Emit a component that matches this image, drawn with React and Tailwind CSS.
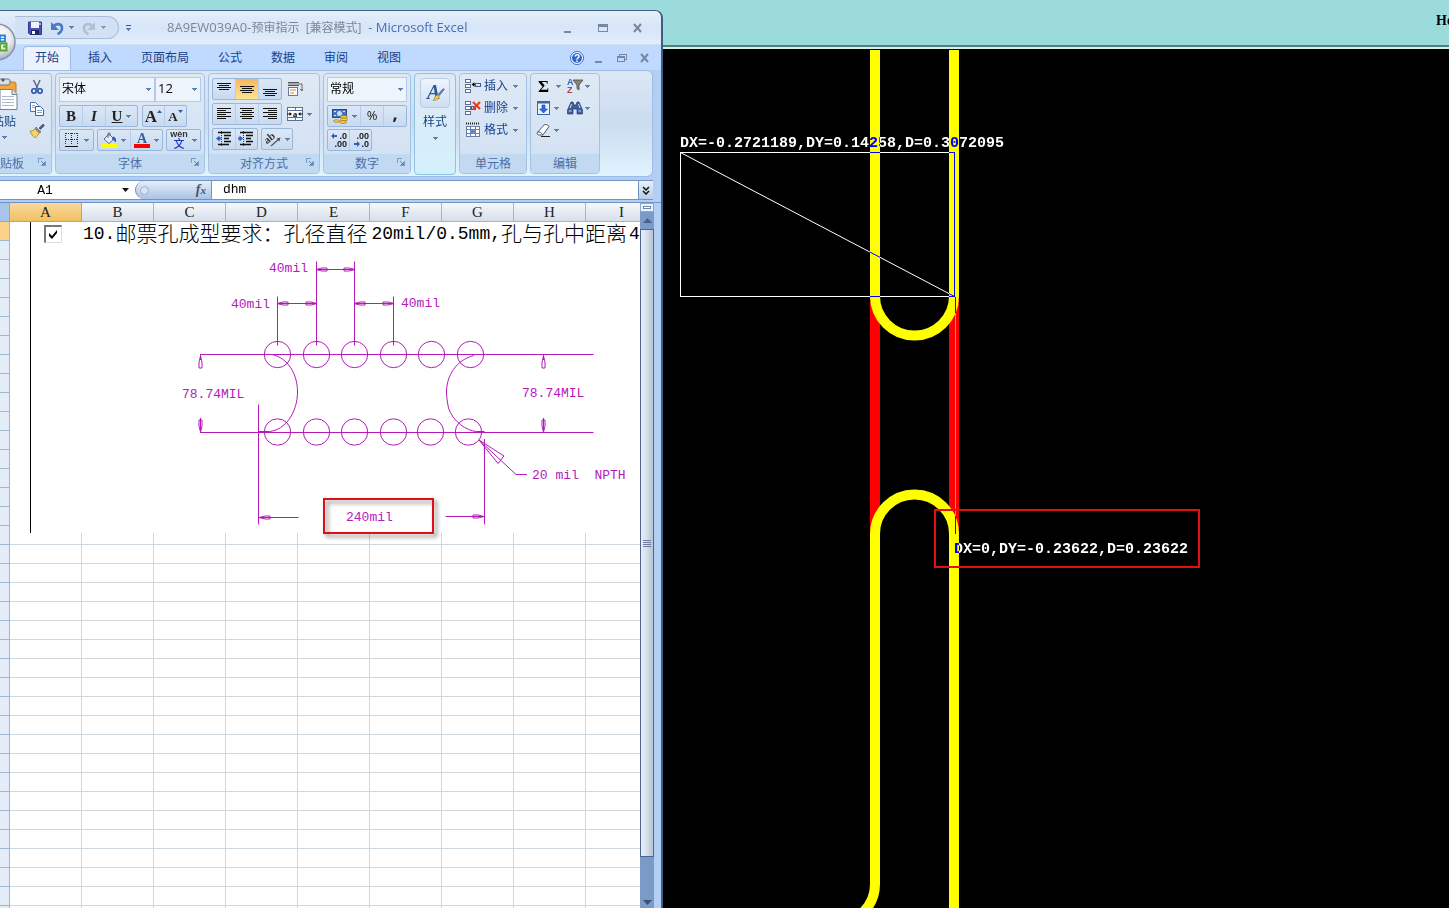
import clsx from 'clsx';

const COLUMNS = ['A', 'B', 'C', 'D', 'E', 'F', 'G', 'H', 'I'];
const ROWS = Array.from({ length: 37 }, (_, i) => i + 1);
const TABS = ['开始', '插入', '页面布局', '公式', '数据', '审阅', '视图'];

const INK = '#b41ab8';
const UI_FONT = "font-['Open_Sans','Noto_Sans_CJK_SC',sans-serif]";
const MONO_FONT = "font-['Liberation_Mono','Noto_Sans_CJK_SC',monospace]";

/* ---------- small icons ---------- */

function Caret({ className }) {
  return (
    <svg viewBox="0 0 5 3" className={clsx('h-[3px] w-[5px] shrink-0', className)} fill="#5f7fae" shapeRendering="crispEdges">
      <path d="M0 0h5v1H4v1H3v1H2V2H1V1H0z" />
    </svg>
  );
}

function Icon({ children, size = 'size-4' }) {
  return (
    <svg viewBox="0 0 16 16" className={clsx('shrink-0', size)} fill="none">
      {children}
    </svg>
  );
}

function LinesIcon({ d }) {
  return (
    <Icon>
      <path d={d} stroke="#111" shapeRendering="crispEdges" />
    </Icon>
  );
}

function SaveIcon() {
  return (
    <Icon>
      <path d="M1.500 2h13v12.500H3L1.500 13z" fill="#4a50b4" stroke="#31368c" />
      <rect x="4" y="2" width="8" height="6" fill="#eef2fc" />
      <rect x="12" y="3" width="2" height="2" fill="#a9b2ea" />
      <rect x="4" y="10" width="8" height="4.500" fill="#23275f" />
      <rect x="5" y="11" width="3" height="3" fill="#fff" />
    </Icon>
  );
}

function UndoIcon({ color, flip }) {
  return (
    <Icon>
      <g transform={flip ? 'translate(16 0) scale(-1 1)' : undefined}>
        <path d="M4 7C7 3 13 3 13 8c0 3-2 5-4.500 6" stroke={color} strokeWidth="2.600" />
        <path d="M2 2v8h8z" fill={color} />
      </g>
    </Icon>
  );
}

function ScissorsIcon() {
  return (
    <Icon>
      <path d="M4.500 1l4.500 9M11 1L7 10" stroke="#5c6f8e" strokeWidth="1.600" />
      <circle cx="5" cy="12" r="2.200" stroke="#2852b0" strokeWidth="1.600" />
      <circle cx="11" cy="12" r="2.200" stroke="#2852b0" strokeWidth="1.600" />
    </Icon>
  );
}

function CopyIcon() {
  return (
    <Icon>
      <path d="M1.500 1.500h5l3 3v6h-8z" fill="#fff" stroke="#4b73b5" />
      <path d="M6.500 5.500h5l3 3v6h-8z" fill="#fff" stroke="#3461ad" />
      <path d="M3 4.500h3M3 6.500h3M8 9.500h5M8 11.500h5" stroke="#7fa0d6" />
    </Icon>
  );
}

function BrushIcon() {
  return (
    <Icon>
      <path d="M10 5l4-4 1.500 1.500-4 4z" fill="#4e5e8c" stroke="#3a466c" strokeWidth=".6" />
      <path d="M7 4l5 5-2 1-4-4z" fill="#8a8a9a" stroke="#55586a" strokeWidth=".6" />
      <path d="M6 6l4 4c-1 3-3 4-4 5C4 13 2 11 1 8c2 0 4-1 5-2z" fill="#f2d46a" stroke="#a68424" strokeWidth=".8" />
    </Icon>
  );
}

function ClipboardIcon() {
  return (
    <svg viewBox="0 0 28 32" className="h-8 w-7 shrink-0" fill="none">
      <rect x="1" y="4" width="25" height="26" rx="2" fill="#efa93c" stroke="#b97c24" />
      <rect x="7" y="1" width="13" height="6" rx="2" fill="#d9dde4" stroke="#6d7480" />
      <circle cx="13" cy="2" r="1.500" fill="#555" />
      <path d="M10 11.500h12l5 5V31.500H10z" fill="#fff" stroke="#6e7f98" />
      <path d="M22 11.500v5h5" stroke="#6e7f98" fill="#dbe4f2" />
      <path d="M12 18.500h12M12 21.500h12M12 24.500h12M12 27.500h12" stroke="#b0b9c8" />
    </svg>
  );
}

function BorderIcon() {
  return (
    <Icon>
      <path d="M1.500 1.500h12M1.500 7.500h12M1.500 1v12M7.500 1v12M13.500 1v12" stroke="#333" strokeDasharray="1 1" shapeRendering="crispEdges" />
      <path d="M1 14.500h13" stroke="#111" strokeWidth="1" shapeRendering="crispEdges" />
    </Icon>
  );
}

function FillColorIcon() {
  return (
    <Icon>
      <path d="M8 2l5 5-5 4.500-5-4.500z" fill="#e8eef8" stroke="#5a6988" />
      <path d="M7 6V1.500c0-1 2-1 2 0V4" stroke="#5a6988" />
      <path d="M12 5c2 0 3 2 2.500 5-1-2-2-2.500-3-2.500z" fill="#2d5cc0" stroke="#2d5cc0" />
      <rect x="0" y="12" width="16" height="4" fill="#ff0" />
    </Icon>
  );
}

function FontColorIcon() {
  return (
    <Icon>
      <text x="8" y="11" textAnchor="middle" fontSize="14" fontWeight="700" fill="#3c5f9e" className="font-['Liberation_Serif',serif]">A</text>
      <rect x="0" y="12" width="16" height="4" fill="#f00" />
    </Icon>
  );
}

function PhoneticIcon() {
  return (
    <svg viewBox="0 0 18 18" className="size-[18px] shrink-0">
      <text x="9" y="6" textAnchor="middle" fontSize="9" fontWeight="700" fill="#333" className="font-['Liberation_Sans',sans-serif]">wén</text>
      <text x="9" y="17" textAnchor="middle" fontSize="11" fontWeight="500" fill="#2036c8" className="font-['Noto_Sans_CJK_SC',sans-serif]">文</text>
    </svg>
  );
}

function WrapIcon() {
  return (
    <Icon>
      <path d="M1 1.500h11M1 4.500h11" stroke="#555" />
      <path d="M1 3h14v7l-2-2m2 2l1-2" stroke="#6b5a4c" strokeWidth=".9" />
      <rect x="1.500" y="6.500" width="9" height="8" fill="#fff" stroke="#6a7a96" />
      <path d="M3 9h6M3 12h4" stroke="#d9884a" strokeWidth="1.200" />
    </Icon>
  );
}

function MergeIcon() {
  return (
    <Icon>
      <rect x=".5" y="1.500" width="15" height="13" fill="#fff" stroke="#5d7396" />
      <path d="M.500 4.500h15M.500 11.500h15M8.500 1.500v3M8.500 11.500v3" stroke="#5d7396" />
      <path d="M0 8h4M12 8h4" stroke="#111" />
      <path d="M2.500 6l2.500 2-2.500 2zM13.500 6L11 8l2.500 2z" fill="#111" />
      <text x="8" y="10.500" textAnchor="middle" fontSize="9" fontWeight="700" fill="#111" className="font-['Liberation_Serif',serif]">a</text>
    </Icon>
  );
}

function IndentIcon({ right }) {
  return (
    <Icon>
      <path d="M2 1.500h13M8 4.500h7M8 7.500h5M8 10.500h7M2 13.500h11" stroke="#111" strokeWidth="1.400" />
      <path d="M5.500 0v16" stroke="#333" strokeDasharray="1 1" />
      <path d={right ? 'M5 7.500L1.500 4.500v2H0v2h1.500v2z' : 'M0 7.500L3.500 4.500v2H5v2H3.500v2z'} fill="#2f5fc4" />
    </Icon>
  );
}

function OrientationIcon() {
  return (
    <Icon>
      <text x="1" y="13" fontSize="11" fontWeight="700" fill="#333" transform="rotate(-40 5 11) translate(0 -2)" className="font-['Liberation_Serif',serif]">ab</text>
      <path d="M6 15l8-7" stroke="#555" strokeWidth="1.200" />
      <path d="M15.500 6.500l-4 1 3 3z" fill="#555" />
    </Icon>
  );
}

function CurrencyIcon() {
  return (
    <Icon>
      <rect x=".5" y="1.500" width="14" height="8" fill="#4a75b8" stroke="#294d88" />
      <circle cx="7.500" cy="5.500" r="2.500" fill="#c9dbf4" />
      <path d="M2 3.500h2M11 3.500h2M2 7.500h2" stroke="#dce8fa" />
      <ellipse cx="12" cy="9" rx="3.500" ry="1.500" fill="#f7cb4d" stroke="#a8741a" strokeWidth=".7" />
      <ellipse cx="12" cy="11.500" rx="3.500" ry="1.500" fill="#f7cb4d" stroke="#a8741a" strokeWidth=".7" />
      <ellipse cx="11" cy="14" rx="3.500" ry="1.500" fill="#f7cb4d" stroke="#a8741a" strokeWidth=".7" />
      <ellipse cx="4.500" cy="13" rx="3" ry="1.300" fill="#f7cb4d" stroke="#a8741a" strokeWidth=".7" />
    </Icon>
  );
}

function DecimalIcon({ more }) {
  return (
    <svg viewBox="0 0 18 16" className="h-4 w-[18px] shrink-0">
      <g fontSize="9" fontWeight="700" fill="#222" className="font-['Liberation_Sans',sans-serif]">
        <text x="17" y="7" textAnchor="end">{more ? '.0' : '.00'}</text>
        <text x="17" y="15" textAnchor="end">{more ? '.00' : '.0'}</text>
      </g>
      <path d={more ? 'M1 4l3-3v2h3v2H4v2z' : 'M8 12L5 9v2H2v2h3v2z'} fill="#2f5fc4" />
    </svg>
  );
}

function StyleIcon() {
  return (
    <Icon size="size-5">
      <text x="7" y="13" textAnchor="middle" fontSize="16" fontStyle="italic" fontWeight="700" fill="#2e5596" className="font-['Liberation_Serif',serif]">A</text>
      <path d="M15.500 5l-4 5-1-1 4-4.500z" fill="#6b7fae" stroke="#44557f" strokeWidth=".5" />
      <path d="M11.500 10c0 3-3 4-5 4 1-1 1-3 3-4.500z" fill="#f3c94f" stroke="#9c7a1d" strokeWidth=".5" />
    </Icon>
  );
}

function CellsIcon({ kind }) {
  if (kind === 'format') {
    return (
      <Icon>
        <path d="M1 1.500h14" stroke="#222" strokeDasharray="1 1" strokeWidth="2" />
        <rect x="1.500" y="4.500" width="13" height="10" fill="#fff" stroke="#6b7fa6" />
        <path d="M1.500 7.500h13M1.500 11.500h13M5.500 4.500v10M10.500 4.500v10" stroke="#6b7fa6" />
        <rect x="5" y="7" width="6" height="5" fill="#5c89d6" />
      </Icon>
    );
  }
  return (
    <Icon>
      <rect x=".5" y="1.500" width="5" height="3" fill="#fff" stroke="#5b6f95" />
      <rect x=".5" y="6.500" width="5" height="3" fill="#fff" stroke="#5b6f95" />
      <rect x=".5" y="11.500" width="5" height="3" fill="#fff" stroke="#5b6f95" />
      {kind === 'insert' ? (
        <>
          <path d="M6.500 6.500l3-2.500v5z M9 6h2v1H9z" fill="#111" />
          <rect x="10.500" y="5.500" width="5" height="3" fill="#dbe7fb" stroke="#3c5ea0" />
        </>
      ) : (
        <>
          <rect x="6.500" y="6.500" width="4" height="3" fill="#dbe7fb" stroke="#3c5ea0" />
          <path d="M8 2l7 7M15 2L8 9" stroke="#e4401f" strokeWidth="2.200" />
        </>
      )}
    </Icon>
  );
}

function SortFilterIcon() {
  return (
    <Icon>
      <g fontSize="9" fontWeight="700" className="font-['Liberation_Sans',sans-serif]">
        <text x="0" y="7" fill="#3563b8">A</text>
        <text x="0" y="15" fill="#b04054">Z</text>
      </g>
      <path d="M6 2h10l-4 5v5l-2-1.500V7z" fill="#8a8578" stroke="#4c4a44" strokeWidth=".8" />
    </Icon>
  );
}

function FillDownIcon() {
  return (
    <Icon>
      <rect x="1.500" y="1.500" width="12" height="13" fill="#eaf2ff" stroke="#3c66b0" />
      <rect x="1" y="1" width="13" height="2.500" fill="#3c66b0" />
      <path d="M6 5h3v4h2.500l-4 4-4-4H6z" fill="#2e6be0" stroke="#1d479c" strokeWidth=".6" />
    </Icon>
  );
}

function BinocularsIcon() {
  return (
    <Icon>
      <path d="M4 2h2l1 3h2l1-3h2l3.500 8v4H10V9H6v5H.500v-4z" fill="#3f5f9c" stroke="#263c6c" strokeWidth=".7" />
      <path d="M2 11h2.500M11.500 11H14M4.500 4L3 8M11.500 4L13 8" stroke="#cfe0fa" />
    </Icon>
  );
}

function EraserIcon() {
  return (
    <Icon>
      <path d="M1 11l7-8c1-1 5 0 5 1.500L7 13H3C1.500 13 1 12 1 11z" fill="#fff" stroke="#4b5a78" />
      <path d="M1.500 10c2-.5 4 .5 5 2.500" stroke="#4b5a78" />
      <path d="M5 14.500h9" stroke="#222" />
    </Icon>
  );
}

function LauncherIcon() {
  return (
    <svg viewBox="0 0 9 9" className="size-[9px]" fill="none" shapeRendering="crispEdges">
      <path d="M1.500 6V1.500H6M8.500 4v4.500H4" stroke="#7c9cc8" />
      <path d="M4 4l3 3M7.500 4.500v3h-3" stroke="#6485b8" />
    </svg>
  );
}

/* ---------- ribbon pieces ---------- */

function RibbonGroup({ title, launcher, className, children }) {
  return (
    <section className={clsx('flex h-[101px] shrink-0 flex-col overflow-hidden rounded-sm border border-[#a5c2e4] bg-linear-to-b from-[#dfe9f5] to-[#d0e0f2]', className)}>
      <div className="flex-1 px-[3px] pt-[3px]">{children}</div>
      <div className="relative flex h-[19px] items-center justify-center bg-[#c1d9f1] text-[#4a6ea9]">
        {title}
        {launcher && (
          <button aria-label={title} className="absolute top-[3px] right-[5px]">
            <LauncherIcon />
          </button>
        )}
      </div>
    </section>
  );
}

function ButtonBar({ className, children }) {
  return (
    <div className={clsx('flex h-[22px] divide-x divide-[#b9cde8] overflow-hidden rounded-xs border border-[#9ab6da] bg-linear-to-b from-[#dbe7f6] to-[#c8daf0]', className)}>
      {children}
    </div>
  );
}

function ToolButton({ label, caret, active, className, children }) {
  return (
    <button
      aria-label={label}
      className={clsx('flex items-center justify-center', active && 'bg-linear-to-b from-[#f5b565] to-[#fde58f]', caret && 'gap-1', className || 'flex-1')}
    >
      {children}
      {caret && <Caret />}
    </button>
  );
}

function RibbonSelect({ label, value, className }) {
  return (
    <div className={clsx('relative h-[25px]', className)}>
      <select aria-label={label} className="h-full w-full appearance-none border border-[#b3cbe8] bg-[#eef4fc] px-[2px] pb-[2px] text-black">
        <option>{value}</option>
      </select>
      <Caret className="pointer-events-none absolute top-[11px] right-1" />
    </div>
  );
}

function WindowButtons({ restore, className }) {
  return (
    <div className={clsx('flex items-center', className)}>
      <button aria-label="最小化">
        <svg viewBox="0 0 10 10" className="size-[10px]"><path d="M1 8h7v2H1z" fill="#7888a0" /></svg>
      </button>
      <button aria-label={restore ? '还原窗口' : '最大化'}>
        <svg viewBox="0 0 10 10" className="size-[10px]" fill="none" stroke="#7888a0" shapeRendering="crispEdges">
          {restore ? <path d="M2.500 3V1.500h7v5H8M.500 3.500h7v5h-7zM2 1h8M0 4h8" /> : <path d="M.500 1.500h9v7h-9zM0 2.500h10M0 3.500h10" />}
        </svg>
      </button>
      <button aria-label="关闭">
        <svg viewBox="0 0 10 10" className="size-[10px]"><path d="M1 1l7 8M8 1L1 9" stroke="#7888a0" strokeWidth="2" /></svg>
      </button>
    </div>
  );
}

function OfficeButton() {
  return (
    <button aria-label="Office" className="absolute top-[12px] -left-[22px]">
      <svg viewBox="0 0 38 38" className="size-[38px]" fill="none">
        <defs>
          <radialGradient id="orb" cx=".5" cy=".3" r=".7">
            <stop offset="0" stopColor="#ffffff" />
            <stop offset=".6" stopColor="#e6e9f0" />
            <stop offset="1" stopColor="#a9afbd" />
          </radialGradient>
        </defs>
        <circle cx="19" cy="19" r="18" fill="url(#orb)" stroke="#8790a5" strokeWidth="1.500" />
        <path d="M15 12.500h6M22 12.500h5v6h-5z" fill="#fff" stroke="#2a82d2" strokeWidth="1.800" />
        <path d="M22 15.500h5" stroke="#2a82d2" />
        <path d="M16 20.500h12.500v7H16zM22 20v8M25 23.500h4" stroke="#56a829" strokeWidth="2" />
      </svg>
    </button>
  );
}

function TitleBar() {
  return (
    <header className="flex h-[33px] items-center bg-linear-to-b from-[#e6effb] via-[#d6e5f8] to-[#e2edfb]">
      <div className="ml-[15px] flex h-[23px] w-[104px] items-center rounded-r-full border border-l-0 border-[#a9bedc] bg-[#d3e1f4] pl-[12px]">
        <button aria-label="保存"><SaveIcon /></button>
        <button aria-label="撤消" className="ml-[6px] flex items-center gap-[4px]"><UndoIcon color="#4b78c8" /><Caret /></button>
        <button aria-label="恢复" className="ml-[7px] flex items-center gap-[4px] opacity-70"><UndoIcon color="#a3b3cc" flip /><Caret /></button>
      </div>
      <button aria-label="自定义快速访问工具栏" className="ml-[7px] flex flex-col gap-[2px]">
        <span className="h-px w-[5px] bg-[#35558c]" />
        <Caret />
      </button>
      <h1 className="ml-[36px] flex-1 whitespace-pre text-[12px] text-[#7d8796]">
        <span className="text-[13px]">8A9EW039A0-</span>预审指示&nbsp; [兼容模式]<span className="text-[13px] text-[#4a6fae]">{'  - Microsoft Excel'}</span>
      </h1>
      <WindowButtons className="mr-[18px] gap-[25px]" />
    </header>
  );
}

function TabStrip() {
  return (
    <nav className="flex h-[26px] items-stretch border-t border-[#cfe0f6] bg-[#bfd9ff] pl-[23px]">
      <div className="flex flex-1 gap-[5px] pt-px">
        {TABS.map((tab, i) => (
          <button
            key={tab}
            className={clsx(
              'pb-px text-[#15428b]',
              i === 0 ? 'rounded-t-sm border border-b-0 border-[#9dbde6] bg-[#eaf3fd] px-[11px]' : 'px-3'
            )}
          >
            {tab}
          </button>
        ))}
      </div>
      <div className="mr-[11px] flex items-center gap-[10px]">
        <button aria-label="帮助">
          <svg viewBox="0 0 14 14" className="size-[14px]">
            <circle cx="7" cy="7" r="6.500" fill="#fff" stroke="#3e68b8" />
            <circle cx="7" cy="7" r="5" fill="#2f64cc" />
            <text x="7" y="10.500" textAnchor="middle" fontSize="10" fontWeight="700" fill="#fff" className="font-['Liberation_Sans',sans-serif]">?</text>
          </svg>
        </button>
        <WindowButtons restore className="gap-[13px]" />
      </div>
    </nav>
  );
}

function Ribbon() {
  return (
    <div className="mr-[8px] flex h-[107px] gap-[3px] rounded-r-md border border-l-0 border-[#9dbde6] bg-linear-to-b from-[#dbe7f5] via-[#cbdcf0] to-[#dff4ff] pt-[2px]">
      {/* 剪贴板 */}
      <section className="flex h-[101px] w-[52px] shrink-0 flex-col overflow-hidden rounded-r-sm border border-l-0 border-[#a5c2e4] bg-linear-to-b from-[#dfe9f5] to-[#d0e0f2]">
        <div className="flex flex-1 justify-between pr-[6px]">
          <button className="-ml-[10px] flex flex-col items-center pt-[4px]">
            <ClipboardIcon />
            <span className="mt-[3px] leading-[18px] text-[#15428b]">粘贴</span>
            <Caret className="mt-[5px]" />
          </button>
          <div className="flex flex-col gap-[6px] pt-[5px]">
            <button aria-label="剪切"><ScissorsIcon /></button>
            <button aria-label="复制"><CopyIcon /></button>
            <button aria-label="格式刷"><BrushIcon /></button>
          </div>
        </div>
        <div className="flex h-[19px] items-center justify-between bg-[#c1d9f1] pr-[5px] text-[#4a6ea9]">
          <span className="-ml-[12px] whitespace-nowrap">剪贴板</span>
          <button aria-label="剪贴板" className="-mt-[5px]"><LauncherIcon /></button>
        </div>
      </section>

      <RibbonGroup title="字体" launcher className="w-[150px]">
        <div className="flex">
          <RibbonSelect label="字体" value="宋体" className="w-[96px]" />
          <RibbonSelect label="字号" value="12" className="w-[46px] text-[13px]" />
        </div>
        <div className="mt-[3px] flex gap-[4px] font-['Liberation_Serif',serif] text-[15px] text-[#222]">
          <ButtonBar className="w-[79px]">
            <ToolButton className="w-[23px] font-bold">B</ToolButton>
            <ToolButton className="w-[23px] font-bold italic">I</ToolButton>
            <ToolButton caret className="flex-1 font-bold"><span className="underline">U</span></ToolButton>
          </ButtonBar>
          <ButtonBar className="w-[45px] font-bold">
            <ToolButton label="增大字号">
              <span className="text-[17px] leading-none">A</span>
              <svg viewBox="0 0 5 3" className="mb-[10px] h-[3px] w-[5px]"><path d="M0 3L2.500 0 5 3z" fill="#2f5fa8" /></svg>
            </ToolButton>
            <ToolButton label="减小字号">
              <span className="text-[13px] leading-none">A</span>
              <svg viewBox="0 0 5 3" className="mb-[10px] h-[3px] w-[5px]"><path d="M0 0h5L2.500 3z" fill="#2f5fa8" /></svg>
            </ToolButton>
          </ButtonBar>
        </div>
        <div className="mt-[2px] flex gap-[3px]">
          <ButtonBar className="w-[35px]"><ToolButton label="边框" caret><BorderIcon /></ToolButton></ButtonBar>
          <ButtonBar className="w-[67px]">
            <ToolButton label="填充颜色" caret><FillColorIcon /></ToolButton>
            <ToolButton label="字体颜色" caret><FontColorIcon /></ToolButton>
          </ButtonBar>
          <ButtonBar className="w-[35px]"><ToolButton label="拼音" caret><PhoneticIcon /></ToolButton></ButtonBar>
        </div>
      </RibbonGroup>

      <RibbonGroup title="对齐方式" launcher className="w-[112px]">
        <div className="flex gap-[5px] pt-px">
          <ButtonBar className="w-[70px]">
            <ToolButton label="顶端对齐"><LinesIcon d="M1 2.500h14M3 4.500h10M1 6.500h14M3 8.500h10" /></ToolButton>
            <ToolButton label="垂直居中" active><LinesIcon d="M1 5.500h14M3 7.500h10M1 9.500h14M3 11.500h10" /></ToolButton>
            <ToolButton label="底端对齐"><LinesIcon d="M1 8.500h14M3 10.500h10M1 12.500h14M3 14.500h10" /></ToolButton>
          </ButtonBar>
          <button aria-label="自动换行"><WrapIcon /></button>
        </div>
        <div className="mt-[3px] flex gap-[5px]">
          <ButtonBar className="w-[70px]">
            <ToolButton label="文本左对齐"><LinesIcon d="M1 2.500h14M1 4.500h9M1 6.500h14M1 8.500h9M1 10.500h14M1 12.500h9" /></ToolButton>
            <ToolButton label="居中"><LinesIcon d="M1 2.500h14M3 4.500h10M1 6.500h14M3 8.500h10M1 10.500h14M3 12.500h10" /></ToolButton>
            <ToolButton label="文本右对齐"><LinesIcon d="M1 2.500h14M6 4.500h9M1 6.500h14M6 8.500h9M1 10.500h14M6 12.500h9" /></ToolButton>
          </ButtonBar>
          <button aria-label="合并后居中" className="flex items-center gap-1"><MergeIcon /><Caret /></button>
        </div>
        <div className="mt-[3px] flex gap-[3px]">
          <ButtonBar className="w-[46px]">
            <ToolButton label="减少缩进量"><IndentIcon /></ToolButton>
            <ToolButton label="增加缩进量"><IndentIcon right /></ToolButton>
          </ButtonBar>
          <ButtonBar className="w-[32px]"><ToolButton label="方向" caret><OrientationIcon /></ToolButton></ButtonBar>
        </div>
      </RibbonGroup>

      <RibbonGroup title="数字" launcher className="w-[88px]">
        <RibbonSelect label="数字格式" value="常规" className="w-[80px]" />
        <ButtonBar className="mt-[3px] w-[80px]">
          <ToolButton label="会计数字格式" caret className="w-[33px]"><CurrencyIcon /></ToolButton>
          <ToolButton className="flex-1 text-[13px] text-[#222]">%</ToolButton>
          <ToolButton className="flex-1 pb-[6px] text-[18px] leading-none font-bold text-[#222]">,</ToolButton>
        </ButtonBar>
        <ButtonBar className="mt-[2px] w-[45px]">
          <ToolButton label="增加小数位数"><DecimalIcon more /></ToolButton>
          <ToolButton label="减少小数位数"><DecimalIcon /></ToolButton>
        </ButtonBar>
      </RibbonGroup>

      <button className="flex h-[102px] w-[42px] shrink-0 flex-col items-center rounded-sm border border-[#8ec3e4] bg-linear-to-b from-[#dfe9f5] to-[#d3f0fc] pt-[4px] text-[#15428b]">
        <span className="flex size-[30px] items-center justify-center rounded-sm border border-[#b9cce6] bg-linear-to-b from-[#edf4fd] to-[#cfdff3]"><StyleIcon /></span>
        <span className="mt-[5px] leading-[18px]">样式</span>
        <Caret className="mt-[6px]" />
      </button>

      <RibbonGroup title="单元格" className="w-[68px]">
        <div className="flex flex-col gap-[4px] pl-[2px] text-[#15428b]">
          <button className="flex h-[18px] items-center gap-[3px]"><CellsIcon kind="insert" />插入<Caret className="ml-[2px]" /></button>
          <button className="flex h-[18px] items-center gap-[3px]"><CellsIcon kind="delete" />删除<Caret className="ml-[2px]" /></button>
          <button className="flex h-[18px] items-center gap-[3px]"><CellsIcon kind="format" />格式<Caret className="ml-[2px]" /></button>
        </div>
      </RibbonGroup>

      <RibbonGroup title="编辑" className="w-[70px]">
        <div className="grid grid-cols-[28px_28px] gap-x-[3px] gap-y-[4px] pl-[2px]">
          <button className="flex h-[18px] items-center gap-[7px] pl-[2px] font-['Liberation_Serif',serif] text-[17px] leading-none font-bold text-black">Σ<Caret /></button>
          <button aria-label="排序和筛选" className="flex h-[18px] items-center gap-[2px]"><SortFilterIcon /><Caret /></button>
          <button aria-label="填充" className="flex h-[18px] items-center gap-[2px]"><FillDownIcon /><Caret /></button>
          <button aria-label="查找和选择" className="flex h-[18px] items-center gap-[2px]"><BinocularsIcon /><Caret /></button>
          <button aria-label="清除" className="flex h-[18px] items-center gap-[2px]"><EraserIcon /><Caret /></button>
        </div>
      </RibbonGroup>
    </div>
  );
}

function FormulaBar() {
  return (
    <div className={clsx('mr-[8px] flex h-[20px] border-y border-[#6f93c2] bg-[#d6e4f5] text-[13px] text-black', MONO_FONT)}>
      <div className="relative w-[135px] bg-white">
        <input aria-label="名称框" defaultValue="A1" className="h-full w-[90px] bg-transparent text-center outline-none" />
        <svg viewBox="0 0 7 4" className="absolute top-[7px] right-[6px] h-[4px] w-[7px]"><path d="M0 0h7L3.500 4z" fill="#111" /></svg>
      </div>
      <div className="flex w-[77px] border-r border-[#6f93c2] bg-white">
        <div className="flex flex-1 items-center justify-between rounded-l-full border-l border-[#6f93c2] bg-linear-to-b from-[#e6effa] to-[#a9c2e6] pr-[5px] pl-[4px]">
          <span className="size-[9px] rounded-full border border-[#9fb0ca] bg-[#dbe3ee]" />
          <button aria-label="插入函数" className="flex items-baseline font-['Liberation_Serif',serif] text-[14px] leading-[16px] font-bold text-[#4b5563] italic">
            f<span className="text-[11px]">x</span>
          </button>
        </div>
      </div>
      <input aria-label="编辑栏" defaultValue="dhm" className="min-w-0 flex-1 bg-white pl-[11px] outline-none" />
      <button aria-label="展开编辑栏" className="flex w-[15px] items-center justify-center border-l border-[#6f93c2] bg-linear-to-b from-[#eaf2fc] to-[#b7cdea]">
        <svg viewBox="0 0 8 9" className="h-[9px] w-[8px]" fill="none" stroke="#111" strokeWidth="1.500"><path d="M1 1l3 3 3-3M1 5l3 3 3-3" /></svg>
      </button>
    </div>
  );
}

/* ---------- stamp-hole drawing on the sheet ---------- */

function HoleDrawing() {
  const topHoles = [277, 316, 354, 393, 431, 470];
  const bottomHoles = [277, 316, 354, 393, 430, 468];
  return (
    <svg className="pointer-events-none absolute inset-0 h-full w-full overflow-visible" fill="none" stroke={INK}>
      <g transform="translate(-10 -222)">
        {topHoles.map((x) => <circle key={x} cx={x + 0.5} cy="354.500" r="13.200" />)}
        {bottomHoles.map((x) => <circle key={x} cx={x + 0.5} cy="432" r="13.200" />)}
        <path d="M200 354.500h393.500M200 432.500h393.500" />
        <path d="M258 354.500h14C288 358 297.500 374 297.500 392c0 20-12 38-28 39.500h-11" />
        <path d="M474 355.500C456 360 446.500 376 446.500 392c0 5 1 11 2 16 4 13 18 23 28 23.500h8" />
        {/* top spacing dimensions */}
        <path d="M316.500 261.500v84M354.500 261.500v84M277.500 296.500v49M393.500 296.500v49" />
        <path d="M316.500 269.500h38M277.500 303.500h39M354.500 303.500h39" />
        {[[316, 269], [277, 303], [354, 303]].map(([x, y]) => (
          <path key={`${x}-${y}`} d={`M${x} ${y + 0.5}l6-1.500h5v3h-5z`} />
        ))}
        {[[355, 269], [317, 303], [394, 303]].map(([x, y]) => (
          <path key={`${x}-${y}`} d={`M${x} ${y + 0.5}l-6-1.500h-5v3h5z`} />
        ))}
        {/* height dimensions */}
        {[200, 543].map((x) => (
          <g key={x}>
            <path d={`M${x + 0.5} 355v5M${x + 0.5} 432v-14`} />
            <path d={`M${x + 0.5} 356l-1.500 6v6h3v-6zM${x + 0.5} 432l-1.500-6v-6h3v6z`} />
          </g>
        ))}
        {/* overall width */}
        <path d="M258.500 404.500v120M484.500 439v85.500M258.500 517.500h40M445.500 516.500h39" />
        <path d="M259 517.500l6-1.500h5v3h-5zM484 516.500l-6-1.500h-5v3h5z" />
        {/* NPTH leader */}
        <path d="M479 440l37 34.500h11M479 440l25 16-6 7.500z" />
        <g fill={INK} stroke="none" fontSize="13" className={MONO_FONT}>
          <text x="269" y="272">40mil</text>
          <text x="231" y="308">40mil</text>
          <text x="401" y="307">40mil</text>
          <text x="182" y="398">78.74MIL</text>
          <text x="522" y="397">78.74MIL</text>
          <text x="532" y="479" xmlSpace="preserve">20 mil&#160; NPTH</text>
          <text x="346" y="521">240mil</text>
        </g>
        <rect x="324" y="499" width="109" height="34" stroke="#e01010" strokeWidth="2" className="drop-shadow-[3px_3px_2px_rgba(0,0,0,0.5)]" />
      </g>
    </svg>
  );
}

function Sheet() {
  return (
    <div className="relative min-w-0 flex-1 overflow-hidden bg-white">
      <table className="w-[658px] table-fixed border-separate border-spacing-0">
        <thead>
          <tr className="h-[19px]">
            <th className="w-[10px] border-r border-b border-[#8fa9cc] bg-[#a9c4e9] p-0" />
            {COLUMNS.map((c, i) => (
              <th
                key={c}
                className={clsx(
                  "h-[19px] w-[72px] border-r border-b p-0 font-['Liberation_Serif',serif] text-[15px] leading-[18px] font-normal text-[#222]",
                  i === 0
                    ? 'border-[#e59a3c] bg-linear-to-b from-[#f9d99f] to-[#f1c15f]'
                    : 'border-[#9eb6ce] bg-linear-to-b from-[#f6f9fc] to-[#d6dfea]'
                )}
              >
                {c}
              </th>
            ))}
          </tr>
        </thead>
        <tbody>
          {ROWS.map((r) => (
            <tr key={r}>
              <td className={clsx('h-[19px] border-r border-b border-[#9eb6ce] p-0', r === 1 ? 'bg-[#fbd28a]' : 'bg-[#e4ecf7]')} />
              {COLUMNS.map((c) => <td key={c} className="border-r border-b border-[#cfd7df] p-0" />)}
            </tr>
          ))}
        </tbody>
      </table>

      {/* object floating over the cells */}
      <div className="absolute top-[19px] right-0 left-[10px] h-[311px] bg-white">
        <div className="ml-[20px] h-full border-l border-black">
          <label className={clsx('flex h-[24px] items-center whitespace-pre text-[21px] leading-[24px] font-light text-black', MONO_FONT)}>
            <span className="relative ml-[13px] flex size-[18px] shrink-0">
              <input type="checkbox" defaultChecked className="size-[18px] appearance-none border-2 border-r border-b border-[#777] border-r-[#ddd] border-b-[#ddd] bg-white" />
              <svg viewBox="0 0 10 10" className="pointer-events-none absolute top-[4px] left-[4px] size-[10px]"><path d="M1 4l3 3 5-6v3L4 10 1 7z" fill="#000" /></svg>
            </span>
            <span className="ml-[21px] text-[18px]">10.</span>
            <span className="pt-[4px]">邮票孔成型要求：孔径直径</span>
            <span className="ml-[4px] text-[18px]">20mil/0.5mm,</span>
            <span className="pt-[4px]">孔与孔中距离</span>
            <span className="ml-[2px] text-[18px]">4</span>
          </label>
        </div>
        <HoleDrawing />
      </div>
    </div>
  );
}

function ScrollBar() {
  return (
    <div className="flex w-[14px] shrink-0 flex-col bg-[#7a9ac8]">
      <div className="h-[9px] border border-[#8fa9cc] bg-[#eef4fb] px-[2px] pt-[2px]">
        <div className="h-[3px] border border-[#6c86b0] bg-white" />
      </div>
      <button aria-label="向上滚动" className="flex h-[17px] items-center justify-center">
        <svg viewBox="0 0 9 5" className="h-[5px] w-[9px]"><path d="M0 5L4.500 0 9 5z" fill="#4a5f88" /></svg>
      </button>
      <div className="flex flex-1 items-center justify-center border border-[#4f6694] bg-linear-to-r from-[#e8edf6] via-[#dbe3ee] via-40% to-[#b3c3d6]">
        <svg viewBox="0 0 8 7" className="h-[7px] w-[8px]" stroke="#6d7f9c" shapeRendering="crispEdges"><path d="M0 .500h8M0 2.500h8M0 4.500h8M0 6.500h8" /></svg>
      </div>
      <button aria-label="向下滚动" className="flex h-[51px] items-end justify-center pb-[3px]">
        <svg viewBox="0 0 9 5" className="h-[5px] w-[9px]"><path d="M0 0h9L4.500 5z" fill="#3e5078" /></svg>
      </button>
    </div>
  );
}

function ExcelWindow() {
  return (
    <div className={clsx('absolute top-[10px] bottom-0 left-0 flex w-[663px] flex-col overflow-hidden rounded-tr-lg border-t border-r-2 border-[#3f5f80] bg-[#b3cef2] text-[12px]', UI_FONT)}>
      <TitleBar />
      <TabStrip />
      <Ribbon />
      <div className="h-[3px] shrink-0" />
      <FormulaBar />
      <div className="h-[2px] shrink-0" />
      <div className="flex min-h-0 flex-1 border-t border-[#6f93c2]">
        <Sheet />
        <ScrollBar />
        <div className="w-[7px] shrink-0 bg-[#b3cef2]" />
      </div>
      <OfficeButton />
    </div>
  );
}

/* ---------- board viewer behind the workbook ---------- */

function BoardCanvas() {
  return (
    <svg className="min-h-0 w-full flex-1 bg-black" fill="none">
      <g transform="translate(0 -49)">
        <path d="M875 297V533M954 297V533" stroke="#f00" strokeWidth="10" />
        <path d="M875 50V296A39.500 39.500 0 0 0 954 296V50" stroke="#ff0" strokeWidth="10" />
        <path d="M954 908V534A39.500 39.500 0 0 0 875 534V884A39.500 39.500 0 0 1 835.500 923.500" stroke="#ff0" strokeWidth="10" />
        <path d="M955.500 297V534" stroke="#26264a" />
        <path d="M955.500 313V516" stroke="#a9a4a4" />
        <g stroke="#fff" className="mix-blend-difference">
          <rect x="680.500" y="152.500" width="274" height="144" shapeRendering="crispEdges" />
          <path d="M680.500 152.500L954.500 296.500" />
        </g>
        <rect x="935" y="510" width="264" height="57" stroke="#e01010" strokeWidth="2" />
        <g fill="#fff" fontSize="15" fontWeight="700" className="mix-blend-difference font-['Liberation_Mono',monospace]">
          <text x="680" y="147">DX=-0.2721189,DY=0.14258,D=0.3072095</text>
          <text x="954" y="553">DX=0,DY=-0.23622,D=0.23622</text>
        </g>
      </g>
    </svg>
  );
}

export default function App() {
  return (
    <div className="relative flex h-screen flex-col overflow-hidden bg-black">
      <header className="flex h-[49px] shrink-0 justify-end border-b-2 border-[#d5eeee] bg-[#9bdbdb]">
        <div className="flex flex-1 justify-end border-b-2 border-[#4f7f80] pt-[10px]">
          <button className="flex h-[20px] w-[13px] items-center overflow-hidden font-['Liberation_Serif',serif] text-[14px] font-bold text-black">He</button>
        </div>
      </header>
      <BoardCanvas />
      <ExcelWindow />
    </div>
  );
}
